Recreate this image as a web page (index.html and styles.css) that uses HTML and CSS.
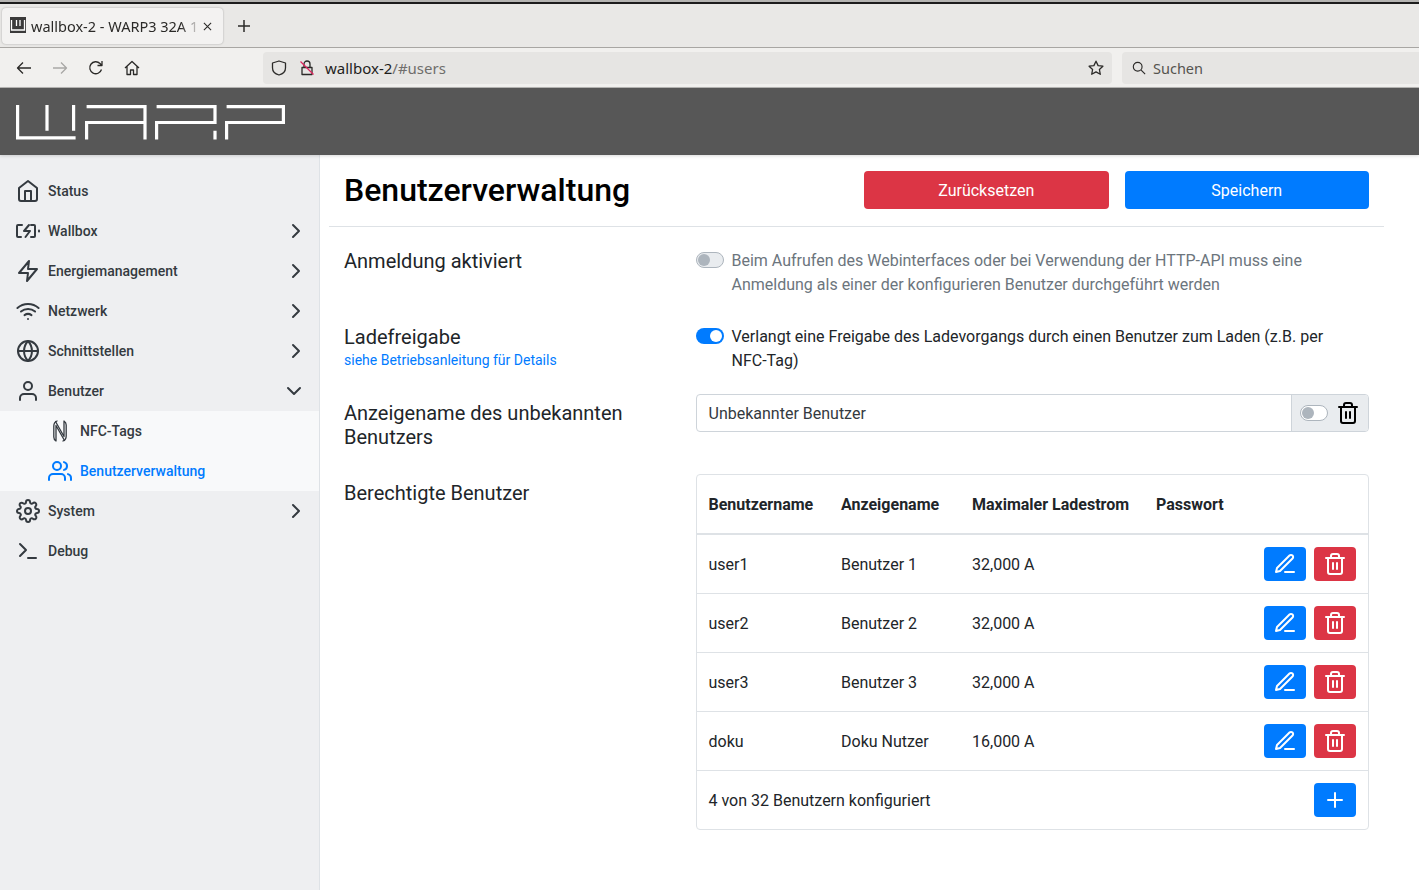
FILE: index.html
```html
<!DOCTYPE html>
<html lang="de">
<head>
    <meta charset="UTF-8">
    <title>wallbox-2 - WARP3 32A</title>
    <link rel="stylesheet" href="styles.css">
</head>
<body>
    <svg class="icon-defs" width="0" height="0">
        <symbol id="i-home" viewBox="0 0 24 24"><path d="M3 9l9-7 9 7v11a2 2 0 0 1-2 2H5a2 2 0 0 1-2-2z"/><polyline points="9 22 9 12 15 12 15 22"/></symbol>
        <symbol id="i-charger" viewBox="0 0 24 24"><path d="M6 6H2a1 1 0 0 0-1 1v10a1 1 0 0 0 1 1h3"/><path d="M15 6h3a1 1 0 0 1 1 1v10a1 1 0 0 1-1 1h-3"/><polyline points="13 6 8 12 14 12 9.500 18"/><line x1="23" y1="11.500" x2="23" y2="12.500"/></symbol>
        <symbol id="i-zap" viewBox="0 0 24 24"><polygon points="13 2 3 14 12 14 11 22 21 10 12 10 13 2"/></symbol>
        <symbol id="i-wifi" viewBox="0 0 24 24"><path d="M5 12.550a11 11 0 0 1 14.080 0"/><path d="M1.420 9a16 16 0 0 1 21.160 0"/><path d="M8.530 16.110a6 6 0 0 1 6.950 0"/><line x1="12" y1="20" x2="12.010" y2="20"/></symbol>
        <symbol id="i-globe" viewBox="0 0 24 24"><circle cx="12" cy="12" r="10"/><line x1="2" y1="12" x2="22" y2="12"/><path d="M12 2a15.300 15.300 0 0 1 4 10 15.300 15.300 0 0 1-4 10 15.300 15.300 0 0 1-4-10 15.300 15.300 0 0 1 4-10z"/></symbol>
        <symbol id="i-user" viewBox="0 0 24 24"><path d="M20 21v-2a4 4 0 0 0-4-4H8a4 4 0 0 0-4 4v2"/><circle cx="12" cy="7" r="4"/></symbol>
        <symbol id="i-users" viewBox="0 0 24 24"><path d="M17 21v-2a4 4 0 0 0-4-4H5a4 4 0 0 0-4 4v2"/><circle cx="9" cy="7" r="4"/><path d="M23 21v-2a4 4 0 0 0-3-3.870"/><path d="M16 3.130a4 4 0 0 1 0 7.750"/></symbol>
        <symbol id="i-nfc" viewBox="0 0 24 24"><g class="nfc-lines"><path d="M9 2C6.500 3 5.800 4.500 5.800 7v11c0 1.500.6 3 2.200 4V6.500l8.500 15"/><path d="M15 22c2.500-1 3.200-2.500 3.200-5V6c0-1.500-.6-3-2.200-4v15.500L7.500 2.500"/></g></symbol>
        <symbol id="i-settings" viewBox="0 0 24 24"><circle cx="12" cy="12" r="3"/><path d="M19.400 15a1.650 1.650 0 0 0 .33 1.820l.06.06a2 2 0 0 1 0 2.830 2 2 0 0 1-2.830 0l-.06-.06a1.650 1.650 0 0 0-1.820-.33 1.650 1.650 0 0 0-1 1.510V21a2 2 0 0 1-2 2 2 2 0 0 1-2-2v-.09A1.650 1.650 0 0 0 9 19.400a1.650 1.650 0 0 0-1.820.33l-.06.06a2 2 0 0 1-2.830 0 2 2 0 0 1 0-2.830l.06-.06a1.650 1.650 0 0 0 .33-1.820 1.650 1.650 0 0 0-1.510-1H3a2 2 0 0 1-2-2 2 2 0 0 1 2-2h.09A1.650 1.650 0 0 0 4.600 9a1.650 1.650 0 0 0-.33-1.820l-.06-.06a2 2 0 0 1 0-2.830 2 2 0 0 1 2.830 0l.06.06a1.650 1.650 0 0 0 1.820.33H9a1.650 1.650 0 0 0 1-1.510V3a2 2 0 0 1 2-2 2 2 0 0 1 2 2v.09a1.650 1.650 0 0 0 1 1.510 1.650 1.650 0 0 0 1.820-.33l.06-.06a2 2 0 0 1 2.830 0 2 2 0 0 1 0 2.830l-.06.06a1.650 1.650 0 0 0-.33 1.820V9a1.650 1.650 0 0 0 1.510 1H21a2 2 0 0 1 2 2 2 2 0 0 1-2 2h-.09a1.650 1.650 0 0 0-1.510 1z"/></symbol>
        <symbol id="i-terminal" viewBox="0 0 24 24"><polyline points="4 17 10 11 4 5"/><line x1="12" y1="19" x2="20" y2="19"/></symbol>
        <symbol id="i-right" viewBox="0 0 24 24"><polyline points="9 18 15 12 9 6"/></symbol>
        <symbol id="i-down" viewBox="0 0 24 24"><polyline points="6 9 12 15 18 9"/></symbol>
        <symbol id="i-trash" viewBox="0 0 24 24"><polyline points="3 6 5 6 21 6"/><path d="M19 6v14a2 2 0 0 1-2 2H7a2 2 0 0 1-2-2V6m3 0V4a2 2 0 0 1 2-2h4a2 2 0 0 1 2 2v2"/><line x1="10" y1="11" x2="10" y2="17"/><line x1="14" y1="11" x2="14" y2="17"/></symbol>
        <symbol id="i-edit" viewBox="0 0 24 24"><path d="M12 20h9"/><path d="M16.500 3.500a2.121 2.121 0 0 1 3 3L7 19l-4 1 1-4L16.500 3.500z"/></symbol>
        <symbol id="i-plus" viewBox="0 0 24 24"><line x1="12" y1="5" x2="12" y2="19"/><line x1="5" y1="12" x2="19" y2="12"/></symbol>
    </svg>

    <div class="browser-tabs">
        <div class="tab">
            <svg class="favicon" viewBox="0 0 16 16"><rect width="16" height="16" fill="#3a3a3a"/><path d="M1.500 3v10h13V3M6.500 3v6M10 3v6" fill="none" stroke="#fff" stroke-width="1.300"/></svg>
            <span class="tab-title">wallbox-2 - WARP3 32A 1</span>
            <svg class="tab-close" viewBox="0 0 10 10"><path d="M1 1l8 8M9 1l-8 8"/></svg>
        </div>
        <svg class="tab-new" viewBox="0 0 12 12"><path d="M6 0v12M0 6h12"/></svg>
    </div>

    <div class="browser-toolbar">
        <div class="nav-buttons">
            <svg class="tool-icon" viewBox="0 0 16 16"><path d="M15 8H1.500M7 2.500L1.500 8 7 13.500"/></svg>
            <svg class="tool-icon faded" viewBox="0 0 16 16"><path d="M1 8h13.500M9 2.500L14.500 8 9 13.500"/></svg>
            <svg class="tool-icon" viewBox="0 0 16 16"><path d="M13.500 9.500A6 6 0 1 1 12 3.500L14 5.500M14 1v4.500H9.500"/></svg>
            <svg class="tool-icon" viewBox="0 0 16 16"><path d="M1 8l7-6.500L15 8M3 6.500V14.500h3.500V10h3v4.500H13V6.500"/></svg>
        </div>
        <div class="url-bar">
            <svg class="tool-icon" viewBox="0 0 16 16"><path d="M8 1l6.500 2v5c0 3.500-3 6-6.500 7-3.500-1-6.500-3.500-6.500-7V3z"/></svg>
            <svg class="tool-icon lock" viewBox="0 0 16 16"><path d="M5 7V4a3 3 0 0 1 6 0v3M3 7.500h10v7H3z"/><path class="lock-slash" d="M1.500 1.500l13 13"/></svg>
            <span class="url-text">wallbox-2<span class="url-path">/#users</span></span>
            <svg class="tool-icon star" viewBox="0 0 16 16"><path d="M8 1.200l2.100 4.400 4.800.6-3.500 3.300.9 4.800L8 11.900l-4.300 2.400.9-4.800L1.100 6.200l4.800-.6z"/></svg>
        </div>
        <div class="search-bar">
            <svg class="tool-icon" viewBox="0 0 16 16"><circle cx="6.500" cy="6.500" r="5"/><path d="M10.500 10.500L15 15"/></svg>
            <span>Suchen</span>
        </div>
    </div>

    <header class="app-header">
        <svg class="logo" viewBox="0 0 270 35" width="270" height="35">
            <path d="M1.600 0v32.800h58M31 0v25.700M57.600 0v25.700"/>
            <path d="M70.600 34.500V17.500H129M70.600 1.600H129V34.500"/>
            <path d="M140.600 34.500V17.500H199M140.600 1.600H199V19M199 25.700V34.500"/>
            <path d="M210.600 34.500V17.500H267.400V1.600H210.600"/>
        </svg>
    </header>

    <div class="app-body">
        <nav class="sidebar">
            <a class="nav-item"><svg class="nav-icon"><use href="#i-home"/></svg>Status</a>
            <a class="nav-item"><svg class="nav-icon"><use href="#i-charger"/></svg>Wallbox<svg class="chevron"><use href="#i-right"/></svg></a>
            <a class="nav-item"><svg class="nav-icon"><use href="#i-zap"/></svg>Energiemanagement<svg class="chevron"><use href="#i-right"/></svg></a>
            <a class="nav-item"><svg class="nav-icon"><use href="#i-wifi"/></svg>Netzwerk<svg class="chevron"><use href="#i-right"/></svg></a>
            <a class="nav-item"><svg class="nav-icon"><use href="#i-globe"/></svg>Schnittstellen<svg class="chevron"><use href="#i-right"/></svg></a>
            <a class="nav-item"><svg class="nav-icon"><use href="#i-user"/></svg>Benutzer<svg class="chevron down"><use href="#i-down"/></svg></a>
            <div class="subnav">
                <a class="nav-item"><svg class="nav-icon"><use href="#i-nfc"/></svg>NFC-Tags</a>
                <a class="nav-item active"><svg class="nav-icon"><use href="#i-users"/></svg>Benutzerverwaltung</a>
            </div>
            <a class="nav-item"><svg class="nav-icon"><use href="#i-settings"/></svg>System<svg class="chevron"><use href="#i-right"/></svg></a>
            <a class="nav-item"><svg class="nav-icon"><use href="#i-terminal"/></svg>Debug</a>
        </nav>

        <main class="content">
            <div class="page-head">
                <h1>Benutzerverwaltung</h1>
                <div class="head-buttons">
                    <button class="btn btn-red">Zurücksetzen</button>
                    <button class="btn btn-blue">Speichern</button>
                </div>
            </div>

            <div class="form-row row-login">
                <label class="form-label">Anmeldung aktiviert</label>
                <div class="switch-line muted">
                    <span class="switch off"></span>
                    <span>Beim Aufrufen des Webinterfaces oder bei Verwendung der HTTP-API muss eine Anmeldung als einer der konfigurieren Benutzer durchgeführt werden</span>
                </div>
            </div>

            <div class="form-row row-release">
                <div class="form-label">
                    <label>Ladefreigabe</label>
                    <a class="sub-link">siehe Betriebsanleitung für Details</a>
                </div>
                <div class="switch-line">
                    <span class="switch on"></span>
                    <span>Verlangt eine Freigabe des Ladevorgangs durch einen Benutzer zum Laden (z.B. per NFC-Tag)</span>
                </div>
            </div>

            <div class="form-row row-unknown">
                <label class="form-label">Anzeigename des unbekannten Benutzers</label>
                <div class="input-group">
                    <div class="input-text">Unbekannter Benutzer</div>
                    <div class="input-append">
                        <span class="switch off"></span>
                        <svg class="append-trash"><use href="#i-trash"/></svg>
                    </div>
                </div>
            </div>

            <div class="form-row">
                <label class="form-label label-users">Berechtigte Benutzer</label>
                <table class="user-table">
                    <colgroup>
                        <col class="col-name"><col class="col-display"><col class="col-current"><col><col class="col-actions">
                    </colgroup>
                    <thead>
                        <tr><th>Benutzername</th><th>Anzeigename</th><th>Maximaler Ladestrom</th><th>Passwort</th><th></th></tr>
                    </thead>
                    <tbody>
                        <tr>
                            <td>user1</td><td>Benutzer 1</td><td>32,000 A</td><td></td>
                            <td class="actions"><button class="icon-btn btn-blue"><svg><use href="#i-edit"/></svg></button><button class="icon-btn btn-red"><svg><use href="#i-trash"/></svg></button></td>
                        </tr>
                        <tr>
                            <td>user2</td><td>Benutzer 2</td><td>32,000 A</td><td></td>
                            <td class="actions"><button class="icon-btn btn-blue"><svg><use href="#i-edit"/></svg></button><button class="icon-btn btn-red"><svg><use href="#i-trash"/></svg></button></td>
                        </tr>
                        <tr>
                            <td>user3</td><td>Benutzer 3</td><td>32,000 A</td><td></td>
                            <td class="actions"><button class="icon-btn btn-blue"><svg><use href="#i-edit"/></svg></button><button class="icon-btn btn-red"><svg><use href="#i-trash"/></svg></button></td>
                        </tr>
                        <tr>
                            <td>doku</td><td>Doku Nutzer</td><td>16,000 A</td><td></td>
                            <td class="actions"><button class="icon-btn btn-blue"><svg><use href="#i-edit"/></svg></button><button class="icon-btn btn-red"><svg><use href="#i-trash"/></svg></button></td>
                        </tr>
                    </tbody>
                    <tfoot>
                        <tr>
                            <td colspan="4">4 von 32 Benutzern konfiguriert</td>
                            <td class="actions"><button class="icon-btn btn-blue"><svg><use href="#i-plus"/></svg></button></td>
                        </tr>
                    </tfoot>
                </table>
            </div>
        </main>
    </div>
</body>
</html>
```

FILE: styles.css
```css
* {
    box-sizing: border-box;
}
html, body {
    height: 100%;
}
body {
    margin: 0;
    overflow: hidden;
    display: flex;
    flex-direction: column;
    background-color: #ffffff;
    color: #212529;
    font-family: Roboto, Arial, sans-serif;
    font-size: 16px;
    line-height: 24px;
}
.icon-defs {
    position: absolute;
}
symbol {
    fill: none;
    stroke: currentColor;
    stroke-width: 2;
    stroke-linecap: round;
    stroke-linejoin: round;
}
.nfc-lines {
    stroke-width: 1.300;
}

/* browser chrome */
.browser-tabs {
    height: 48px;
    flex: none;
    display: flex;
    align-items: center;
    padding: 6px 0 1px 2px;
    background-color: #e9e8e6;
    background-image: linear-gradient(#b5b4b2 0 2px, #1c1c1c 2px 4px, transparent 4px);
    border-bottom: 1px solid #a8a6a3;
    font-family: "Noto Sans", sans-serif;
    font-size: 14.500px;
}
.tab {
    width: 221px;
    height: 36px;
    display: flex;
    align-items: center;
    padding-left: 8px;
    background-color: #f3f2f1;
    border-radius: 4px;
    box-shadow: 0 0 2px rgba(0, 0, 0, 0.3);
    color: #2b2a28;
}
.favicon {
    width: 16px;
    height: 16px;
    flex: none;
    margin-bottom: 2px;
}
.tab-title {
    width: 170px;
    margin-left: 5px;
    white-space: nowrap;
    overflow: hidden;
    -webkit-mask-image: linear-gradient(90deg, #000 88%, transparent);
    mask-image: linear-gradient(90deg, #000 88%, transparent);
}
.tab-close {
    width: 9px;
    height: 9px;
    margin-left: 2px;
    fill: none;
    stroke: #2b2a28;
    stroke-width: 1.200;
}
.tab-new {
    width: 12px;
    height: 12px;
    margin-left: 15px;
    fill: none;
    stroke: #2b2a28;
    stroke-width: 1.500;
}
.browser-toolbar {
    height: 40px;
    flex: none;
    display: flex;
    align-items: center;
    background-color: #f1f0ee;
    border-bottom: 1px solid #b8b7b5;
    font-family: "Noto Sans", sans-serif;
    font-size: 15px;
}
.tool-icon {
    width: 16px;
    height: 16px;
    flex: none;
    fill: none;
    stroke: #2b2a28;
    stroke-width: 1.300;
    stroke-linejoin: round;
}
.nav-buttons {
    width: 263px;
    flex: none;
    display: flex;
    gap: 20px;
    padding-left: 16px;
}
.faded {
    stroke: #a9a8a6;
}
.url-bar {
    width: 849px;
    height: 32px;
    flex: none;
    display: flex;
    align-items: center;
    padding: 0 8px;
    background-color: #e6e5e3;
    border-radius: 4px;
    color: #1f1e1c;
}
.lock {
    margin-left: 12px;
}
.lock-slash {
    stroke: #e0245e;
}
.url-text {
    margin-left: 10px;
    flex: 1;
}
.url-path {
    color: #6f6e6c;
}
.search-bar {
    margin-left: 10px;
    flex: 1;
    height: 32px;
    display: flex;
    align-items: center;
    gap: 7px;
    padding-left: 10px;
    background-color: #e6e5e3;
    border-radius: 4px 0 0 4px;
    color: #55544f;
    font-size: 14.500px;
}
.search-bar .tool-icon {
    width: 14px;
    height: 14px;
}

/* app */
.app-header {
    height: 67px;
    flex: none;
    padding: 17px 0 0 16px;
    background-color: #575757;
    position: relative;
    box-shadow: 0 1px 3px rgba(0, 0, 0, 0.15);
}
.logo {
    display: block;
    fill: none;
    stroke: #ffffff;
    stroke-width: 3.200;
}
.app-body {
    flex: 1;
    display: flex;
    min-height: 0;
}
.sidebar {
    width: 320px;
    flex: none;
    padding-top: 16px;
    background-color: #eeeff1;
    border-right: 1px solid #dee2e6;
}
.nav-item {
    height: 40px;
    display: flex;
    align-items: center;
    padding-left: 16px;
    color: #343a40;
    font-size: 14px;
    font-weight: 500;
}
.nav-icon {
    width: 24px;
    height: 24px;
    flex: none;
    margin-right: 8px;
}
.chevron {
    width: 24px;
    height: 24px;
    margin-left: auto;
    margin-right: 11px;
}
.chevron.down {
    margin-right: 13px;
}
.subnav {
    background-color: #f8f9fa;
}
.subnav .nav-item {
    padding-left: 48px;
}
.active {
    color: #007bff;
}
.content {
    flex: 1;
    padding: 0 35px 0 9px;
}
.page-head {
    height: 72px;
    display: flex;
    align-items: center;
    justify-content: space-between;
    padding: 0 15px 1px;
    border-bottom: 1px solid #dee2e6;
}
h1 {
    margin: 0;
    font-size: 32px;
    font-weight: 500;
    line-height: 38px;
    color: #000000;
}
.head-buttons {
    width: 505px;
    display: flex;
    gap: 16px;
}
.btn {
    flex: 1;
    height: 38px;
    padding: 0;
    border: none;
    border-radius: 4px;
    font-family: inherit;
    font-size: 16px;
    color: #ffffff;
}
.btn-red {
    background-color: #dc3545;
    color: #ffffff;
}
.btn-blue {
    background-color: #007bff;
    color: #ffffff;
}
.form-row {
    display: grid;
    grid-template-columns: 352px 673px;
    padding-left: 15px;
}
.form-label {
    font-size: 20px;
    line-height: 24px;
    color: #212529;
}
.row-login {
    padding-top: 22px;
    height: 98px;
}
.row-release {
    height: 69px;
}
.row-unknown {
    height: 80px;
}
.row-unknown .form-label {
    padding-top: 7px;
    width: 300px;
}
.label-users {
    padding-top: 7px;
}
.sub-link {
    display: block;
    margin-top: 1px;
    color: #007bff;
    font-size: 14px;
    line-height: 21px;
}
.switch-line {
    display: flex;
    gap: 7.500px;
    padding-right: 16px;
}
.muted {
    color: #6c757d;
}
.switch {
    width: 28px;
    height: 16px;
    flex: none;
    margin-top: 3px;
    border-radius: 8px;
    position: relative;
    display: block;
}
.switch::after {
    content: "";
    position: absolute;
    top: 2px;
    width: 12px;
    height: 12px;
    border-radius: 50%;
}
.switch.on {
    background-color: #007bff;
}
.switch.on::after {
    right: 2px;
    background-color: #ffffff;
}
.switch.off {
    background-color: #e9ecef;
    border: 1px solid #adb5bd;
}
.switch.off::after {
    top: 1px;
    left: 1px;
    background-color: #adb5bd;
}
.input-group {
    height: 38px;
    display: flex;
    border: 1px solid #ced4da;
    border-radius: 4px;
}
.input-text {
    flex: 1;
    padding: 7px 11.500px 5px;
    color: #343a40;
}
.input-append {
    width: 77px;
    display: flex;
    align-items: center;
    gap: 8px;
    padding-left: 8px;
    background-color: #e9ecef;
    border-left: 1px solid #ced4da;
    border-radius: 0 3px 3px 0;
}
.input-append .switch {
    margin-top: 0;
    background-color: #ffffff;
}
.append-trash {
    width: 24px;
    height: 24px;
    color: #000000;
}
.user-table {
    width: 673px;
    height: 356px;
    table-layout: fixed;
    border-collapse: separate;
    border-spacing: 0;
    border: 1px solid #dee2e6;
    border-radius: 4px;
}
.col-name {
    width: 132.500px;
}
.col-display {
    width: 131px;
}
.col-current {
    width: 184px;
}
.col-actions {
    width: 116px;
}
.user-table th, .user-table td {
    padding: 2px 0 0 11.500px;
    text-align: left;
    vertical-align: middle;
    white-space: nowrap;
}
.user-table th {
    height: 60px;
    font-weight: 700;
    border-bottom: 2px solid #dee2e6;
}
.user-table td {
    height: 59px;
    border-top: 1px solid #dee2e6;
}
.user-table tbody tr:first-child td {
    border-top: none;
    height: 58px;
}
.user-table .actions {
    padding: 0 12px 0 0;
    text-align: right;
}
.icon-btn {
    width: 42px;
    height: 34px;
    padding: 0;
    border: none;
    border-radius: 4px;
    vertical-align: middle;
}
.icon-btn + .icon-btn {
    margin-left: 8px;
}
.icon-btn svg {
    display: block;
    width: 24px;
    height: 24px;
    margin: 0 auto;
}
```
